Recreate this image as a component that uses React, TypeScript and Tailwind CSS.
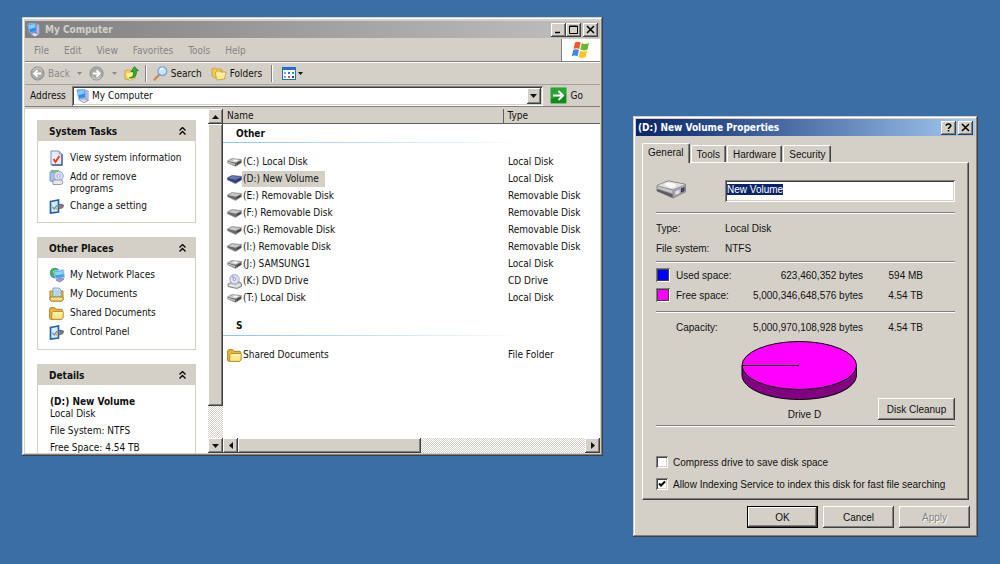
import { useEffect, useRef, useState } from 'react'
import type { ReactNode } from 'react'
import clsx from 'clsx'

// ── Shared bevels ─────────────────────────────────────────────────────────────

const FRAME =
  'bg-[#d4d0c8] shadow-[inset_-1px_-1px_#404040,inset_1px_1px_#d4d0c8,inset_-2px_-2px_#808080,inset_2px_2px_#fff]'
const RAISED =
  'bg-[#d4d0c8] shadow-[inset_-1px_-1px_#404040,inset_1px_1px_#fff,inset_-2px_-2px_#808080]'
const SUNKEN =
  'bg-white shadow-[inset_1px_1px_#808080,inset_-1px_-1px_#fff,inset_2px_2px_#404040,inset_-2px_-2px_#d4d0c8]'
const TRACK =
  'bg-[#eae8e4] bg-[repeating-conic-gradient(#fff_0_25%,#d4d0c8_0_50%)] bg-[length:2px_2px]'

// ── Icons ─────────────────────────────────────────────────────────────────────

function ComputerIcon() {
  return (
    <svg width="14" height="14" viewBox="0 0 16 16" className="shrink-0">
      <path d="M1 1l9-1 1 10-8 1z" fill="#2f8df0" stroke="#9db4d8" />
      <path d="M2 2l7-1 .6 4-7 2z" fill="#7fd0ff" />
      <path d="M11 1l3 1v11l-3 1z" fill="#b9bfdf" stroke="#8a90bb" strokeWidth=".6" />
      <path d="M3 12l6-1 5 2-5 3z" fill="#d7daec" stroke="#7278a8" strokeWidth=".7" />
    </svg>
  )
}

function NavArrow({ flip }: { flip?: boolean }) {
  return (
    <svg width="15" height="15" viewBox="0 0 16 16" className={clsx('shrink-0', flip && 'rotate-180')}>
      <circle cx="8" cy="8" r="7" fill="#a9a9a7" stroke="#8d8d8b" />
      <path d="M3 5a6 6 0 0 1 10 0" fill="none" stroke="#c9c9c7" strokeWidth="1.5" />
      <path d="M12 8H4.500M8 4.500L4.500 8 8 11.500" fill="none" stroke="#fff" strokeWidth="2" />
    </svg>
  )
}

function UpFolderIcon() {
  return (
    <svg width="15" height="15" viewBox="0 0 16 16" className="shrink-0">
      <path d="M1 5l4-1 1 1h5l1 8-5 2-6-1z" fill="#f6d35c" stroke="#c79a2a" strokeWidth=".8" />
      <path d="M2 8l8-1 1 6-5 2z" fill="#fff0a0" />
      <path d="M5.500 12.500c4 0 5-3 4.500-6.500H7.500L11 .8 15.500 5h-2.500c1 5-2 9-7.500 7.500z" fill="#35b02c" stroke="#187018" strokeWidth=".8" />
    </svg>
  )
}

function SearchIcon() {
  return (
    <svg width="15" height="15" viewBox="0 0 16 16" className="shrink-0">
      <path d="M6.500 9.500L1.500 14.500" stroke="#c98a58" strokeWidth="2.400" strokeLinecap="round" />
      <circle cx="10" cy="5.500" r="4.700" fill="#c5e6fb" stroke="#6b9fd6" strokeWidth="1.200" />
      <path d="M7.500 5a2.800 2.800 0 0 1 3-2.300" fill="none" stroke="#fff" strokeWidth="1.300" />
    </svg>
  )
}

function FoldersIcon() {
  return (
    <svg width="16" height="14" viewBox="0 0 16 14" className="shrink-0">
      <path d="M1 2l3-1 1.500 1H10l1 1v6l-7 2-3-2z" fill="#f2cb55" stroke="#c9982c" strokeWidth=".8" />
      <path d="M4 6l2-2h3l1 1h5l-1.500 7L6 13z" fill="#fde98a" stroke="#c9982c" strokeWidth=".8" />
      <path d="M6 7.500l8-1" stroke="#fff7c8" />
    </svg>
  )
}

function ViewsIcon() {
  return (
    <svg width="14" height="13" viewBox="0 0 14 13" className="shrink-0">
      <rect x=".5" y=".5" width="13" height="12" fill="#fff" stroke="#1c6fd8" />
      <path d="M0 0h14v3H0z" fill="#1c6fd8" />
      <path d="M2 5h2v2H2zM2 9h2v2H2z" fill="#8ca0c8" />
      <path d="M6 5h2v2H6z" fill="#3a6fd0" />
      <path d="M6 9h2v2H6z" fill="#d05a3a" />
      <path d="M10 5h2v2h-2z" fill="#3d9a44" />
      <path d="M10 9h2v2h-2z" fill="#2b4fa0" />
    </svg>
  )
}

function FlagIcon() {
  return (
    <svg width="20" height="18" viewBox="0 0 20 18">
      <path d="M4 1.500C6 .3 8 .4 9.700 1.600L8.200 8C6.500 7 4.500 7 2.500 8z" fill="#ee5a2a" />
      <path d="M10.700 2.100c2 1.100 4.300 1.200 7.300-.1l-1.500 6.500c-2.500 1.200-5 1.100-7.200.1z" fill="#6cb82c" />
      <path d="M2.200 9.100c2-1.100 4-1 5.800 0L6.500 15.500C5 14.400 3 14.300.8 15.300z" fill="#3f8ae0" />
      <path d="M9.100 9.700c2 1.100 4.600 1.100 7.100 0l-1.500 6.400c-2.500 1.200-5 1-7.100-.2z" fill="#fbc51e" />
    </svg>
  )
}

function GoIcon() {
  return (
    <svg width="17" height="17" viewBox="0 0 17 17" className="shrink-0">
      <rect x=".5" y=".5" width="16" height="16" rx="1" fill="#2ba334" stroke="#6fbf70" />
      <path d="M1 12l15-5v9H1z" fill="#15891f" />
      <path d="M3 8.500h9.500M8.500 4l4.500 4.500L8.500 13" fill="none" stroke="#fff" strokeWidth="2" />
    </svg>
  )
}

function Triangle({ dir }: { dir: 'up' | 'down' | 'left' | 'right' }) {
  const d = { up: 'M0 5h7L3.500 1z', down: 'M0 1h7L3.500 5z', left: 'M5 0v7L1 3.500z', right: 'M1 0v7l4-3.500z' }[dir]
  const wide = dir === 'up' || dir === 'down'
  return (
    <svg width={wide ? 7 : 6} height={wide ? 6 : 7} viewBox={wide ? '0 0 7 6' : '0 0 6 7'}>
      <path d={d} fill="currentColor" />
    </svg>
  )
}

function Caret({ className }: { className?: string }) {
  return (
    <svg width="5" height="3" viewBox="0 0 5 3" className={className}>
      <path d="M0 0h5L2.500 3z" fill="currentColor" />
    </svg>
  )
}

function ChevronsIcon() {
  return (
    <svg width="7" height="8" viewBox="0 0 7 8" fill="none" stroke="#000" strokeWidth="1.300">
      <path d="M.5 3.500l3-3 3 3M.5 7.500l3-3 3 3" />
    </svg>
  )
}

function InfoIcon() {
  return (
    <svg width="15" height="16" viewBox="0 0 15 16">
      <path d="M2 1h8l3 3v11H2z" fill="#e6effc" stroke="#7a8db8" />
      <path d="M13 4v11H3" fill="none" stroke="#4c5f93" strokeWidth="1.300" />
      <path d="M10 1v3h3" fill="#b9cdf0" stroke="#7a8db8" strokeWidth=".7" />
      <path d="M4.500 9l2 3L10.500 6" fill="none" stroke="#e8431f" strokeWidth="2" />
    </svg>
  )
}

function ProgramsIcon() {
  return (
    <svg width="15" height="16" viewBox="0 0 15 16">
      <path d="M1 3h8v8l-3 2-5-1z" fill="#a9c3ea" stroke="#6a83b5" strokeWidth=".8" />
      <path d="M2 1h8l-1 3H1z" fill="#7fb98a" />
      <circle cx="9.500" cy="7" r="4.800" fill="#d5daf3" stroke="#8b93c5" strokeWidth=".8" />
      <circle cx="9.500" cy="7" r="1.400" fill="#fff" stroke="#8b93c5" strokeWidth=".7" />
      <path d="M4 11h9l1 3-2 1.500H4z" fill="#e8e9ef" stroke="#85879b" strokeWidth=".8" />
    </svg>
  )
}

function SettingIcon() {
  return (
    <svg width="15" height="15" viewBox="0 0 15 15">
      <path d="M1.500 2.500l8-1.500v12l-8 1z" fill="#dcebfb" stroke="#2b5fa8" strokeWidth="1.700" />
      <path d="M3.500 8l1.800 2L8 6" fill="none" stroke="#4f93dd" strokeWidth="1.300" />
      <path d="M6 10l4-4 1 1-3 4z" fill="#e5b433" />
      <path d="M9 7.500l2-2.500 3.500 1-1 3-3.500.5z" fill="#5a8fc0" stroke="#2c4f80" strokeWidth=".7" />
      <path d="M12 6h2.500v2H12z" fill="#d0522d" />
    </svg>
  )
}

function NetworkIcon() {
  return (
    <svg width="16" height="16" viewBox="0 0 16 16">
      <circle cx="6" cy="6" r="5.200" fill="#3b87dd" />
      <path d="M2 3c2-3 6-2 7 0L6 5l1 3-3 2-3-4z" fill="#46b04a" />
      <path d="M4.500 4l10-1.200 1 7.700-9 1z" fill="#35a4f2" stroke="#b7c6de" />
      <path d="M6 5l7.500-.9.4 3.200-7.400 1z" fill="#8bd8ff" />
      <path d="M7 13l4-2 4 1-4 3z" fill="#a7a3d8" stroke="#6a66a8" strokeWidth=".7" />
    </svg>
  )
}

function DocumentsIcon() {
  return (
    <svg width="15" height="15" viewBox="0 0 15 15">
      <path d="M1 4h13v9l-1 1H2l-1-1z" fill="#efbf3f" stroke="#a9781c" strokeWidth=".9" />
      <path d="M4 1h6l2 2v7H4z" fill="#cfe5fa" stroke="#5e8fc5" strokeWidth=".8" />
      <path d="M5.500 4h5M5.500 6h5M5.500 8h5" stroke="#8cb6df" strokeWidth=".8" />
      <path d="M1 10h13v3l-1 1H2l-1-1z" fill="#fbe384" stroke="#a9781c" strokeWidth=".9" />
    </svg>
  )
}

function FolderIcon() {
  return (
    <svg width="15" height="13" viewBox="0 0 15 13" className="shrink-0">
      <path d="M.6 2l1-1.300h4L7 2.300h6l.8 1V11l-1 1.300H1.500L.6 11.500z" fill="#e8b63c" stroke="#a9781c" strokeWidth=".9" />
      <path d="M3 5.500l1-1h9.700l.7 1-.6 5.800-1 1H2.500z" fill="#fde88c" stroke="#b88a28" strokeWidth=".9" />
      <path d="M4 6h9" stroke="#fff8cf" />
    </svg>
  )
}

function DriveIcon({ kind }: { kind: DriveKind }) {
  if (kind === 'dvd') {
    return (
      <svg width="15" height="15" viewBox="0 0 15 15" className="shrink-0">
        <path d="M1 10l4-2h8l1.500 2v2.500L10 14.500 1 12.500z" fill="#c9c9cb" stroke="#6e6e72" strokeWidth=".8" />
        <circle cx="7.500" cy="5.200" r="4.700" fill="#dfdff6" stroke="#9696b8" strokeWidth=".8" />
        <path d="M7.500 5.200L4 2.500l2-1.500z" fill="#a8a2ee" />
        <circle cx="7.500" cy="5.200" r="1.300" fill="#fff" stroke="#7e7ea8" strokeWidth=".8" />
        <path d="M2 11l7 1.500 4-2" fill="none" stroke="#fff" />
      </svg>
    )
  }
  const selected = kind === 'selected'
  return (
    <svg width="15" height="9" viewBox="0 0 15 9" className="shrink-0">
      <path
        d="M.5 2.800L5 .5l9.500 1v3.300L8.500 8.500.5 4.800z"
        fill={selected ? '#34477f' : '#6a6a6c'}
        stroke={selected ? '#4a5d99' : '#a2a2a4'}
        strokeWidth=".7"
      />
      <path d="M1 2.900L5.200.9l8.800 1-5.500 2.900z" fill={selected ? '#6679b3' : '#c8c8ca'} />
      {kind === 'local' && <path d="M6 1.800l4-.2 1 1.400-4 .6z" fill="#f9f9f9" />}
      {kind === 'local' && <path d="M1 3.600l7 2.400v1.200L1 4.600z" fill="#d2d2d4" />}
      <path d="M9.800 5.600l4-2.300v1.200l-4 2.600z" fill={selected ? '#27365f' : '#3a3a3e'} />
    </svg>
  )
}

function BigDriveIcon() {
  return (
    <svg width="31" height="19" viewBox="0 0 31 19">
      <path d="M1 5.500L12 .8l17.500 3.500v7.500L17 18 1 11z" fill="#8b8b8d" stroke="#77777b" strokeWidth=".8" />
      <path d="M1.500 5.500L12 1.200l17 3.300L17 9.500z" fill="#dededf" />
      <path d="M8 4.500c2-2.500 8-3 12 .3 1 1.700-3 3.500-6 3.200z" fill="#f8f8f8" />
      <path d="M1.300 6.300L16.500 10.600v3L1.300 8.600z" fill="#c6c6c8" />
      <path d="M1.300 9.200l15.200 5v3.200L1.300 10.900z" fill="#5c5c60" />
      <path d="M17.300 10.200L29.200 5v6.500l-11.900 5.800z" fill="#a5a5aa" />
      <path d="M19.500 11.500l4-1.800v3.200l-4 2z" fill="#e4e4ea" />
      <path d="M25 8.500l3.500-1.500v4L25 12.700z" fill="#33334a" />
      <path d="M26.200 9.400l1-.4v1.500l-1 .4z" fill="#6a6aff" />
    </svg>
  )
}

function PieChart() {
  return (
    <svg width="117" height="60" viewBox="0 0 117 60" role="img" aria-label="Drive D usage">
      <path d="M1 25v9c0 13.500 25.500 24.500 57.500 24.500S115.500 47.500 115.500 34v-9z" fill="#800080" stroke="#000" />
      <ellipse cx="58.250" cy="24.500" rx="57.250" ry="24" fill="#f0f" stroke="#000" />
      <path d="M1 24.500h57" stroke="#000" />
    </svg>
  )
}

// ── Data ──────────────────────────────────────────────────────────────────────

type DriveKind = 'local' | 'removable' | 'dvd' | 'selected'

const DRIVES: { name: string; type: string; kind: DriveKind }[] = [
  { name: '(C:) Local Disk', type: 'Local Disk', kind: 'local' },
  { name: '(D:) New Volume', type: 'Local Disk', kind: 'selected' },
  { name: '(E:) Removable Disk', type: 'Removable Disk', kind: 'removable' },
  { name: '(F:) Removable Disk', type: 'Removable Disk', kind: 'removable' },
  { name: '(G:) Removable Disk', type: 'Removable Disk', kind: 'removable' },
  { name: '(I:) Removable Disk', type: 'Removable Disk', kind: 'removable' },
  { name: '(J:) SAMSUNG1', type: 'Local Disk', kind: 'local' },
  { name: '(K:) DVD Drive', type: 'CD Drive', kind: 'dvd' },
  { name: '(T:) Local Disk', type: 'Local Disk', kind: 'local' },
]

const MENUS = ['File', 'Edit', 'View', 'Favorites', 'Tools', 'Help']
const TABS = ['General', 'Tools', 'Hardware', 'Security']

// ── Window pieces ─────────────────────────────────────────────────────────────

function TitleButton({ label, children }: { label: string; children: ReactNode }) {
  return (
    <button type="button" aria-label={label} className={clsx(RAISED, 'flex h-[14px] w-[15px] items-center justify-center')}>
      <svg width="9" height="9" viewBox="0 0 9 9" fill="none" stroke="#000" strokeWidth="1.500">
        {children}
      </svg>
    </button>
  )
}

function ScrollButton({ dir }: { dir: 'up' | 'down' | 'left' | 'right' }) {
  return (
    <button
      type="button"
      aria-label={`Scroll ${dir}`}
      className={clsx(RAISED, 'flex h-[15px] w-[15px] shrink-0 items-center justify-center')}
    >
      <Triangle dir={dir} />
    </button>
  )
}

function SidePanel({ title, children }: { title: string; children: ReactNode }) {
  return (
    <section className="border border-[#d4d0c8]">
      <h2 className="flex h-5 items-center justify-between bg-[#d4d0c8] pr-[9px] pl-[11px] font-bold">
        {title}
        <button type="button" aria-label={`Collapse ${title}`}>
          <ChevronsIcon />
        </button>
      </h2>
      {children}
    </section>
  )
}

function TaskLink({ icon, children }: { icon: ReactNode; children: ReactNode }) {
  return (
    <li>
      <a href="#" className="flex min-h-4 items-start gap-[5px]">
        <span className="flex h-4 w-4 shrink-0 items-center">{icon}</span>
        <span className="pt-[2px] leading-[12px]">{children}</span>
      </a>
    </li>
  )
}

function GroupRow({ title }: { title: string }) {
  return (
    <tr>
      <th colSpan={2} className="h-[30px] p-0 text-left align-top font-bold">
        <div className="flex h-[18px] items-center pl-[13px]">{title}</div>
        <div className="h-px w-[300px] bg-linear-to-r from-[#8fc0f5] to-white" />
      </th>
    </tr>
  )
}

function FileRow({ icon, name, type, selected }: { icon: ReactNode; name: string; type: string; selected?: boolean }) {
  return (
    <tr className="h-[17px]">
      <td className="p-0 pl-1">
        <div className="flex items-center">
          <span className="flex h-4 w-[15px] items-center">{icon}</span>
          <span className={clsx('h-4 px-px leading-4', selected && 'bg-[#d4d0c8] pr-[6px]')}>{name}</span>
        </div>
      </td>
      <td className="p-0 pl-[5px] leading-4">{type}</td>
    </tr>
  )
}

// ── My Computer ───────────────────────────────────────────────────────────────

function ExplorerWindow() {
  return (
    <section
      className={clsx(FRAME, "min-w-0 flex-1 p-[3px] pt-1 font-['DejaVu_Sans_Condensed','DejaVu_Sans',sans-serif] text-[10px] text-[#111]")}
    >
      <header className="flex h-[17px] items-center gap-1 bg-linear-to-r from-[#808080] to-[#c0c0c0] pr-[2px] pl-[2px]">
        <ComputerIcon />
        <h1 className="flex-1 font-bold text-[#d4d0c8]">My Computer</h1>
        <div className="flex">
          <TitleButton label="Minimize">
            <path d="M1 7.500h5" />
          </TitleButton>
          <TitleButton label="Maximize">
            <path d="M.5 1h8v7.500h-8zM.5 1.500h8" strokeWidth="1" />
          </TitleButton>
          <span className="w-[2px]" />
          <TitleButton label="Close">
            <path d="M1 1l7 7M8 1L1 8" />
          </TitleButton>
        </div>
      </header>

      <div className="mt-px flex h-[23px] border-b border-[#808080]">
        <nav className="flex flex-1 items-center gap-[15px] border-r border-[#808080] pl-[9px] text-[#858585]">
          {MENUS.map((m) => (
            <button key={m} type="button">
              {m}
            </button>
          ))}
        </nav>
        <div className="flex w-[38px] items-center justify-center bg-white">
          <FlagIcon />
        </div>
      </div>

      <div className="flex h-[23px] items-center border-t border-b border-t-white border-b-[#a0a0a0] pl-[5px]">
        <button type="button" className="flex items-center gap-[3px] text-[#8a8a8a]">
          <NavArrow />
          Back
          <Caret className="ml-1" />
        </button>
        <button type="button" aria-label="Forward" className="ml-[7px] flex items-center gap-2 text-[#8a8a8a]">
          <NavArrow flip />
          <Caret />
        </button>
        <button type="button" aria-label="Up" className="ml-[7px]">
          <UpFolderIcon />
        </button>
        <span className="mx-[6px] h-[17px] w-[2px] border-l border-[#808080] bg-white" />
        <button type="button" className="flex items-center gap-[3px]">
          <SearchIcon />
          Search
        </button>
        <button type="button" className="ml-[9px] flex items-center gap-[3px]">
          <FoldersIcon />
          Folders
        </button>
        <span className="mx-[9px] h-[17px] w-[2px] border-l border-[#808080] bg-white" />
        <button type="button" aria-label="Views" className="flex items-center gap-[2px]">
          <ViewsIcon />
          <Caret />
        </button>
      </div>

      <div className="flex h-[22px] items-center border-b border-[#808080] pl-[5px]">
        <label htmlFor="address" className="w-[42px]">
          Address
        </label>
        <div className={clsx(SUNKEN, 'flex h-5 flex-1 items-center p-[2px] pl-1')}>
          <ComputerIcon />
          <input id="address" defaultValue="My Computer" className="ml-[2px] min-w-0 flex-1 leading-4 outline-none" />
          <button type="button" aria-label="Show addresses" className={clsx(RAISED, 'flex h-4 w-[14px] items-center justify-center')}>
            <Triangle dir="down" />
          </button>
        </div>
        <button type="button" className="mr-[17px] ml-[7px] flex items-center gap-1">
          <GoIcon />
          Go
        </button>
      </div>

      <div className="mt-px flex h-[345px] border-t border-[#d4d0c8] bg-white">
        <aside className="flex w-[183px] shrink-0 flex-col gap-[14px] overflow-hidden px-3 pt-[11px]">
          <SidePanel title="System Tasks">
            <ul className="flex flex-col gap-[3px] px-[11px] pt-[9px] pb-2">
              <TaskLink icon={<InfoIcon />}>View system information</TaskLink>
              <TaskLink icon={<ProgramsIcon />}>
                Add or remove
                <br />
                programs
              </TaskLink>
              <TaskLink icon={<SettingIcon />}>Change a setting</TaskLink>
            </ul>
          </SidePanel>
          <SidePanel title="Other Places">
            <ul className="flex flex-col gap-[3px] px-[11px] pt-[9px] pb-[9px]">
              <TaskLink icon={<NetworkIcon />}>My Network Places</TaskLink>
              <TaskLink icon={<DocumentsIcon />}>My Documents</TaskLink>
              <TaskLink icon={<FolderIcon />}>Shared Documents</TaskLink>
              <TaskLink icon={<SettingIcon />}>Control Panel</TaskLink>
            </ul>
          </SidePanel>
          <SidePanel title="Details">
            <div className="flex flex-col gap-[5px] px-3 pt-[11px] pb-4 leading-[12px]">
              <p>
                <b>(D:) New Volume</b>
                <br />
                Local Disk
              </p>
              <p>File System: NTFS</p>
              <p>Free Space: 4.54 TB</p>
            </div>
          </SidePanel>
        </aside>

        <div className={clsx(TRACK, 'flex w-[15px] shrink-0 flex-col')}>
          <ScrollButton dir="up" />
          <div className={clsx(RAISED, 'h-[282px]')} />
          <div className="flex-1" />
          <ScrollButton dir="down" />
        </div>

        <div className="flex min-w-0 flex-1 flex-col">
          <div className="flex-1">
            <table className="w-full table-fixed border-collapse text-left">
              <thead>
                <tr className="h-[14px] bg-[#d4d0c8]">
                  <th className="border-b border-[#606060] p-0 pl-[4px] leading-[14px] font-normal">Name</th>
                  <th className="w-[97px] border-b border-l border-[#606060] p-0 pl-[4px] leading-[14px] font-normal">Type</th>
                </tr>
              </thead>
              <tbody>
                <GroupRow title="Other" />
                {DRIVES.map((d) => (
                  <FileRow
                    key={d.name}
                    icon={<DriveIcon kind={d.kind} />}
                    name={d.name}
                    type={d.type}
                    selected={d.kind === 'selected'}
                  />
                ))}
                <tr className="h-[10px]">
                  <td colSpan={2} className="p-0" />
                </tr>
                <GroupRow title="S" />
                <FileRow icon={<FolderIcon />} name="Shared Documents" type="File Folder" />
              </tbody>
            </table>
          </div>
          <div className={clsx(TRACK, 'flex h-[15px]')}>
            <ScrollButton dir="left" />
            <div className={clsx(RAISED, 'w-[183px]')} />
            <div className="flex-1" />
            <ScrollButton dir="right" />
          </div>
        </div>
      </div>
    </section>
  )
}

// ── Volume properties ─────────────────────────────────────────────────────────

function Divider() {
  return <hr className="h-[2px] border-t border-b border-t-[#808080] border-b-white" />
}

function CheckRow({ label, checked: initial }: { label: string; checked?: boolean }) {
  const [checked, setChecked] = useState(!!initial)
  return (
    <label className="flex h-[22px] items-center gap-[5px]">
      <span className="grid">
        <input
          type="checkbox"
          checked={checked}
          onChange={(e) => setChecked(e.target.checked)}
          className={clsx(SUNKEN, 'col-start-1 row-start-1 h-3 w-3 appearance-none')}
        />
        {checked && (
          <svg width="12" height="12" viewBox="0 0 12 12" className="pointer-events-none col-start-1 row-start-1">
            <path d="M3 5.500l2 2L9 3.500" fill="none" stroke="#000" strokeWidth="2" />
          </svg>
        )}
      </span>
      {label}
    </label>
  )
}

function SpaceRow({ swatch, label, bytes, size }: { swatch?: ReactNode; label: string; bytes: string; size: string }) {
  return (
    <tr className="h-5">
      <td className="w-5 p-0">{swatch}</td>
      <th scope="row" className="p-0 text-left font-normal">{label}</th>
      <td className="w-[130px] p-0 text-right">{bytes}</td>
      <td className="w-[92px] p-0 pr-8 text-right">{size}</td>
    </tr>
  )
}

function PropertiesDialog() {
  const [tab, setTab] = useState('General')
  const nameRef = useRef<HTMLInputElement>(null)

  useEffect(() => {
    nameRef.current?.focus()
    nameRef.current?.select()
  }, [])

  return (
    <section
      className={clsx(FRAME, "mt-[99px] w-[345px] shrink-0 p-[3px] pb-[9px] font-['Liberation_Sans',Arial,sans-serif] text-[10px] text-[#111]")}
    >
      <header className="flex h-[17px] items-center bg-linear-to-r from-[#0a246a] to-[#a6caf0] pr-[2px] pl-[2px]">
        <h1 className="flex-1 font-['DejaVu_Sans_Condensed','DejaVu_Sans',sans-serif] text-[10px] font-bold text-white">
          (D:) New Volume Properties
        </h1>
        <div className="flex gap-[2px]">
          <TitleButton label="Help">
            <path d="M2.200 2.800c0-2.400 4.600-2.400 4.600 0 0 1.400-2.300 1.300-2.300 3.200M4.500 7v1.600" />
          </TitleButton>
          <TitleButton label="Close">
            <path d="M1 1l7 7M8 1L1 8" />
          </TitleButton>
        </div>
      </header>

      <div role="tablist" className="flex h-[26px] items-end gap-px pl-[6px]">
        {TABS.map((t) => (
          <button
            key={t}
            type="button"
            role="tab"
            aria-selected={t === tab}
            onClick={() => setTab(t)}
            className={clsx(
              'rounded-t-[2px] border-t border-r border-l border-t-white border-r-[#404040] border-l-white bg-[#d4d0c8] px-[5px] shadow-[inset_-1px_0_#808080]',
              t === tab ? 'z-10 -mb-px h-[20px] pb-[2px]' : 'h-[17px]'
            )}
          >
            {t}
          </button>
        ))}
      </div>

      <div className="mx-[6px] border border-t-white border-r-[#404040] border-b-[#404040] border-l-white px-[13px] pb-1 shadow-[inset_-1px_-1px_#808080]">
        <div className="flex items-start pt-[17px] pb-[10px]">
          <div className="w-[69px]">
            <BigDriveIcon />
          </div>
          <input
            ref={nameRef}
            aria-label="Volume name"
            defaultValue="New Volume"
            className={clsx(SUNKEN, 'h-[22px] min-w-0 flex-1 px-[2px] pt-[3px] pb-[6px] leading-[13px] outline-none selection:bg-[#0a246a] selection:text-white')}
          />
        </div>
        <Divider />
        <dl className="grid grid-cols-[69px_1fr] pt-[5px] pb-[2px] leading-[20px]">
          <dt>Type:</dt>
          <dd>Local Disk</dd>
          <dt>File system:</dt>
          <dd>NTFS</dd>
        </dl>
        <Divider />
        <table className="mt-[2px] w-full border-collapse">
          <tbody>
            <SpaceRow
              swatch={<div className={clsx(SUNKEN, 'h-[14px] w-[14px] p-px')}><div className="h-full w-full border border-[#404040] bg-[#0000ff]" /></div>}
              label="Used space:"
              bytes="623,460,352 bytes"
              size="594 MB"
            />
            <SpaceRow
              swatch={<div className={clsx(SUNKEN, 'h-[14px] w-[14px] p-px')}><div className="h-full w-full border border-[#404040] bg-[#ff00ff]" /></div>}
              label="Free space:"
              bytes="5,000,346,648,576 bytes"
              size="4.54 TB"
            />
            <tr>
              <td colSpan={4} className="h-3 p-0 pt-[6px] align-top">
                <Divider />
              </td>
            </tr>
            <SpaceRow label="Capacity:" bytes="5,000,970,108,928 bytes" size="4.54 TB" />
          </tbody>
        </table>
        <div className="grid grid-cols-[1fr_auto_1fr] items-end pt-1 pb-[5px]">
          <div />
          <figure className="mr-3 flex flex-col items-center">
            <PieChart />
            <figcaption className="pt-2 pl-[10px] leading-[11px]">Drive D</figcaption>
          </figure>
          <button type="button" className={clsx(RAISED, 'h-[22px] w-[77px] justify-self-end')}>
            Disk Cleanup
          </button>
        </div>
        <Divider />
        <div className="pt-6">
          <CheckRow label="Compress drive to save disk space" />
          <CheckRow label="Allow Indexing Service to index this disk for fast file searching" checked />
        </div>
      </div>

      <div className="flex justify-end gap-[5px] pt-[6px] pr-[5px]">
        <button type="button" className="h-[22px] w-[71px] border border-black bg-[#d4d0c8] shadow-[inset_-1px_-1px_#404040,inset_1px_1px_#fff,inset_-2px_-2px_#808080]">
          OK
        </button>
        <button type="button" className={clsx(RAISED, 'h-[22px] w-[71px]')}>
          Cancel
        </button>
        <button type="button" disabled className={clsx(RAISED, 'h-[22px] w-[71px] text-[#808080] text-shadow-[1px_1px_#fff]')}>
          Apply
        </button>
      </div>
    </section>
  )
}

export default function App() {
  return (
    <main className="flex min-h-screen items-start gap-[30px] bg-[#3a6ea5] px-[22px] py-[17px]">
      <ExplorerWindow />
      <PropertiesDialog />
    </main>
  )
}
